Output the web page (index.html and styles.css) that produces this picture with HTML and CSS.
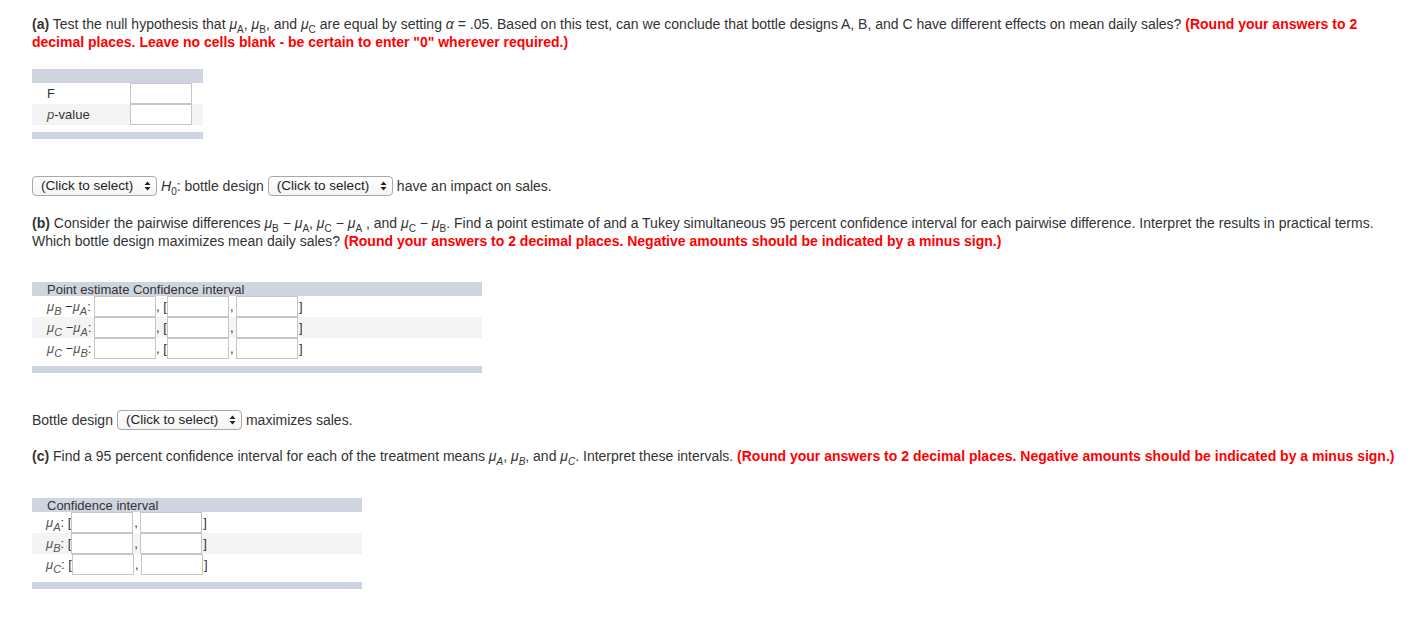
FILE: index.html
```html
<!DOCTYPE html>
<html>
<head>
<meta charset="utf-8">
<link rel="stylesheet" href="styles.css">
</head>
<body>
<div class="page">
  <p class="q q-a"><b>(a)</b> Test the null hypothesis that <i>μ</i><sub>A</sub>, <i>μ</i><sub>B</sub>, and <i>μ</i><sub>C</sub> are equal by setting <i>α</i> = .05. Based on this test, can we conclude that bottle designs A, B, and C have different effects on mean daily sales? <span class="warn">(Round your answers to 2 decimal places. Leave no cells blank - be certain to enter "0" wherever required.)</span></p>

  <div class="tbl tbl-a">
    <div class="thead"></div>
    <div class="row"><span class="lbl lbl-a">F</span><span class="inp"></span></div>
    <div class="row alt"><span class="lbl lbl-a"><i>p</i>-value</span><span class="inp"></span></div>
    <div class="tfoot"></div>
  </div>

  <div class="line line-sel">
    <span class="sel">(Click to select)<svg class="arr" width="7" height="10" viewBox="0 0 7 10"><path d="M3.5 0.5 L6.5 4 L0.5 4 Z M3.5 9.5 L6.5 6 L0.5 6 Z" fill="#222"/></svg></span>
    <span><i>H</i><sub>0</sub>: bottle design</span>
    <span class="sel">(Click to select)<svg class="arr" width="7" height="10" viewBox="0 0 7 10"><path d="M3.5 0.5 L6.5 4 L0.5 4 Z M3.5 9.5 L6.5 6 L0.5 6 Z" fill="#222"/></svg></span>
    <span>have an impact on sales.</span>
  </div>

  <p class="q q-b"><b>(b)</b> Consider the pairwise differences <i>μ</i><sub>B</sub> − <i>μ</i><sub>A</sub>, <i>μ</i><sub>C</sub> − <i>μ</i><sub>A</sub> , and <i>μ</i><sub>C</sub> − <i>μ</i><sub>B</sub>. Find a point estimate of and a Tukey simultaneous 95 percent confidence interval for each pairwise difference. Interpret the results in practical terms. Which bottle design maximizes mean daily sales? <span class="warn">(Round your answers to 2 decimal places. Negative amounts should be indicated by a minus sign.)</span></p>

  <div class="tbl tbl-b">
    <div class="thead">Point estimate Confidence interval</div>
    <div class="row"><span class="lbl lbl-b"><i>μ<sub>B</sub></i> −<i>μ<sub>A</sub></i>:</span><span class="inp"></span><span class="sep">, [</span><span class="inp"></span><span class="sep2">,</span><span class="inp"></span><span class="br">]</span></div>
    <div class="row alt"><span class="lbl lbl-b"><i>μ<sub>C</sub></i> −<i>μ<sub>A</sub></i>:</span><span class="inp"></span><span class="sep">, [</span><span class="inp"></span><span class="sep2">,</span><span class="inp"></span><span class="br">]</span></div>
    <div class="row"><span class="lbl lbl-b"><i>μ<sub>C</sub></i> −<i>μ<sub>B</sub></i>:</span><span class="inp"></span><span class="sep">, [</span><span class="inp"></span><span class="sep2">,</span><span class="inp"></span><span class="br">]</span></div>
    <div class="tfoot"></div>
  </div>

  <div class="line line-bottle">
    <span>Bottle design</span>
    <span class="sel">(Click to select)<svg class="arr" width="7" height="10" viewBox="0 0 7 10"><path d="M3.5 0.5 L6.5 4 L0.5 4 Z M3.5 9.5 L6.5 6 L0.5 6 Z" fill="#222"/></svg></span>
    <span>maximizes sales.</span>
  </div>

  <p class="q q-c"><b>(c)</b> Find a 95 percent confidence interval for each of the treatment means <i>μ<sub>A</sub></i>, <i>μ<sub>B</sub></i>, and <i>μ<sub>C</sub></i>. Interpret these intervals. <span class="warn">(Round your answers to 2 decimal places. Negative amounts should be indicated by a minus sign.)</span></p>

  <div class="tbl tbl-c">
    <div class="thead">Confidence interval</div>
    <div class="row"><span class="lbl lbl-c"><i>μ<sub>A</sub></i>: [</span><span class="inp"></span><span class="sep2">,</span><span class="inp"></span><span class="br">]</span></div>
    <div class="row alt"><span class="lbl lbl-c"><i>μ<sub>B</sub></i>: [</span><span class="inp"></span><span class="sep2">,</span><span class="inp"></span><span class="br">]</span></div>
    <div class="row"><span class="lbl lbl-c"><i>μ<sub>C</sub></i>: [</span><span class="inp"></span><span class="sep2">,</span><span class="inp"></span><span class="br">]</span></div>
    <div class="tfoot"></div>
  </div>
</div>
</body>
</html>
```

FILE: styles.css
```css
html, body {
  margin: 0;
  padding: 0;
  background: #fff;
}
body {
  font-family: "Liberation Sans", Arial, Helvetica, sans-serif;
  font-size: 14px;
  color: #333;
}
.page {
  padding: 0 6px 0 32px;
}
.q {
  margin: 0;
  line-height: 18px;
}
.q b {
  font-weight: bold;
}
.warn {
  color: #f00;
  font-weight: bold;
}
sub {
  font-size: 10px;
  vertical-align: sub;
  line-height: 0;
}
.q-a { padding-top: 15px; }
.q-b { margin-top: 18px; }
.q-c { margin-top: 17px; }

.tbl {
  font-size: 13px;
  line-height: 14px;
}
.tbl sub {
  font-size: 11px;
}
.tbl-a { width: 171px; margin-top: 18px; }
.tbl-b { width: 450px; margin-top: 32px; }
.tbl-c { width: 330px; margin-top: 33px; }

.thead {
  height: 14px;
  background: #cfd5e0;
  padding-left: 15px;
  line-height: 15px;
}
.row {
  height: 21px;
  display: flex;
  align-items: center;
}
.row.alt {
  background: #f4f4f4;
}
.tfoot {
  height: 7px;
  margin-top: 7px;
  background: #cfd5e0;
}
.lbl {
  padding-left: 15px;
  box-sizing: border-box;
  flex: none;
}
.lbl-a { width: 98px; }
.lbl-b { width: 62px; }
.lbl-c { padding-left: 14px; }
.tbl i { color: #555; }
.inp {
  width: 62px;
  height: 21px;
  box-sizing: border-box;
  border: 1px solid #c6c6c6;
  background: #fff;
  flex: none;
}
.sep {
  width: 11px;
  white-space: pre;
  flex: none;
}
.sep2 {
  width: 7px;
  flex: none;
  padding-left: 1px;
  box-sizing: border-box;
}
.br {
  padding-left: 1px;
}

.line {
  display: flex;
  align-items: center;
  gap: 4px;
  line-height: 20px;
}
.line-sel { margin-top: 37px; }
.line-bottle { margin-top: 37px; }

.sel {
  display: inline-flex;
  align-items: center;
  justify-content: space-between;
  width: 125px;
  height: 20px;
  box-sizing: border-box;
  border: 1px solid #a9a9a9;
  border-radius: 4px;
  background: linear-gradient(#ffffff, #f3f3f3);
  padding: 0 5px 0 8px;
  font-size: 13.5px;
  color: #222;
}
.arr {
  display: block;
}
```
